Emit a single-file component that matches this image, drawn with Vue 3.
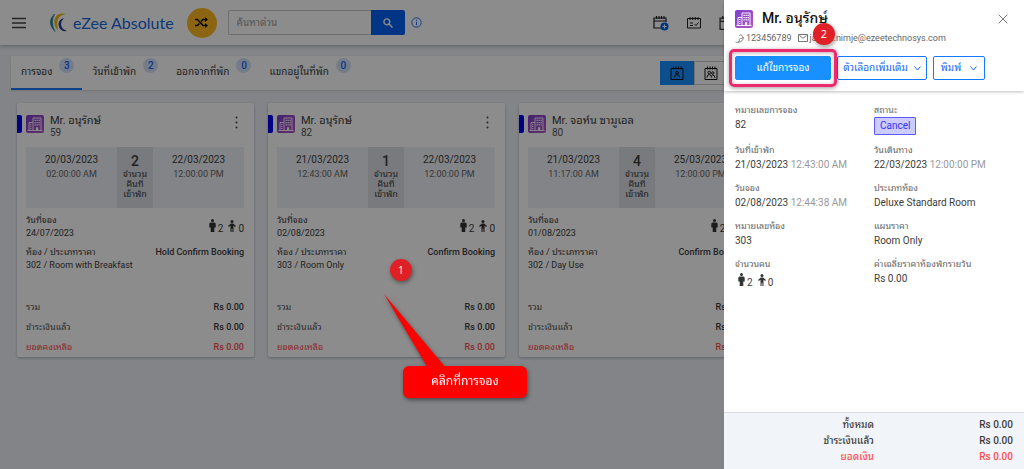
<script setup>
import { ref } from 'vue'

const query = ref('')
const activeTab = ref(0)

const tabs = [
  { label: 'การจอง', count: 3 },
  { label: 'วันที่เข้าพัก', count: 2 },
  { label: 'ออกจากที่พัก', count: 0 },
  { label: 'แขกอยู่ในที่พัก', count: 0 },
]

const bookings = [
  {
    name: 'Mr. อนุรักษ์', id: '59', inDate: '20/03/2023', inTime: '02:00:00 AM', nights: 2,
    outDate: '22/03/2023', outTime: '12:00:00 PM', booked: '24/07/2023',
    room: '302 / Room with Breakfast', status: 'Hold Confirm Booking',
  },
  {
    name: 'Mr. อนุรักษ์', id: '82', inDate: '21/03/2023', inTime: '12:43:00 AM', nights: 1,
    outDate: '22/03/2023', outTime: '12:00:00 PM', booked: '02/08/2023',
    room: '303 / Room Only', status: 'Confirm Booking',
  },
  {
    name: 'Mr. จอห์น ซามูเอล', id: '80', inDate: '21/03/2023', inTime: '11:17:00 AM', nights: 4,
    outDate: '25/03/2023', outTime: '12:00:00 PM', booked: '01/08/2023',
    room: '302 / Day Use', status: 'Confirm Booking',
  },
]

const details = [
  { label: 'หมายเลขการจอง', value: '82' },
  { label: 'สถานะ', tag: 'Cancel' },
  { label: 'วันที่เข้าพัก', value: '21/03/2023', time: '12:43:00 AM' },
  { label: 'วันเดินทาง', value: '22/03/2023', time: '12:00:00 PM' },
  { label: 'วันจอง', value: '02/08/2023', time: '12:44:38 AM' },
  { label: 'ประเภทห้อง', value: 'Deluxe Standard Room' },
  { label: 'หมายเลขห้อง', value: '303' },
  { label: 'แผนราคา', value: 'Room Only' },
  { label: 'จำนวนคน', people: true },
  { label: 'ค่าเฉลี่ยราคาห้องพักรายวัน', value: 'Rs 0.00' },
]
</script>

<template>
  <div class="app">
    <svg class="defs" aria-hidden="true">
      <defs>
        <linearGradient id="violet" x1="0" y1="0" x2="1" y2="1">
          <stop offset="0" stop-color="#7a3fd0" />
          <stop offset="1" stop-color="#b558c0" />
        </linearGradient>
        <symbol id="building" viewBox="0 0 18 18">
          <rect width="18" height="18" rx="2" fill="url(#violet)" />
          <path d="M7 15.500V3h8v12.500M7 7.500H3v8M1.500 15.500h15" fill="none" stroke="#fff" stroke-width=".9" />
          <path d="M8.500 4.700h1.300V6H8.500zm2 0h1.300V6h-1.300zm2 0h1.300V6h-1.300zM8.500 7h1.300v1.300H8.500zm2 0h1.300v1.300h-1.300zm2 0h1.300v1.300h-1.300zM8.500 9.300h1.300v1.300H8.500zm2 0h1.300v1.300h-1.300zm2 0h1.300v1.300h-1.300zM10 12.200h2.200v3.300H10zM4.200 9h1.200v1H4.200zm0 2h1.200v1H4.200zm0 2h1.200v1H4.200z" fill="#fff" />
        </symbol>
        <symbol id="adult" viewBox="0 0 7 13">
          <circle cx="3.500" cy="1.600" r="1.500" />
          <path d="M1.700 3.400h3.600Q6.700 3.600 6.700 5v3.600H5.300V13H1.700V8.600H.3V5Q.3 3.600 1.700 3.400z" />
        </symbol>
        <symbol id="child" viewBox="0 0 8 12">
          <circle cx="4" cy="1.600" r="1.500" />
          <path d="M2.800 3.400h2.400L7.900 6l-.7 1-1.700-1.200V12H4.400V8.800h-.8V12H2.500V5.800L.8 7l-.7-1z" />
        </symbol>
        <symbol id="calendar" viewBox="0 0 15 15">
          <path d="M1 3h13v10.500H1zM1 6h13M3.500 1v3M6.200 1v3M8.800 1v3M11.500 1v3" fill="none" stroke="currentColor" stroke-width="1.200" />
        </symbol>
      </defs>
    </svg>

    <header class="topbar">
      <button class="plain menu" aria-label="Menu">
        <svg width="14" height="12" viewBox="0 0 14 12"><path d="M0 1.500h14M0 6h14M0 10.500h14" stroke="#444" stroke-width="1.300" /></svg>
      </button>
      <a class="brand" href="#">
        <svg width="20" height="20" viewBox="0 0 20 20" fill="none">
          <path d="M5.500 1Q-3 9 6 18.500 1 9 5.500 1z" fill="#1d7f96" stroke="#1d7f96" stroke-width=".6" />
          <path d="M17 1Q7-1 5.500 7q-1 6 4 11Q7 11 9 6q2-4 8-5z" fill="#f5b90a" />
          <path d="M15 5q-7 2-5 9 2 5 8 4-6-2-6-7 0-3 3-6z" fill="#273d8f" />
        </svg>
        <span>eZee Absolute</span>
      </a>
      <button class="shuffle" aria-label="Switch property">
        <svg width="13" height="11" viewBox="0 0 13 11"><path d="M0 2.500h2.500L8 8.500h3M0 8.500h2.500l1.800-2M6.200 4.500 8 2.500h3" fill="none" stroke="#111" stroke-width="1.700" /><path d="M10 0l3 2.500L10 5zM10 6l3 2.500L10 11z" fill="#111" /></svg>
      </button>
      <form class="search" role="search" @submit.prevent>
        <input v-model="query" type="text" placeholder="ค้นหาด่วน" aria-label="ค้นหาด่วน" />
        <button aria-label="Search">
          <svg width="10" height="10" viewBox="0 0 10 10" fill="none" stroke="#fff" stroke-width="1.400"><circle cx="3.800" cy="3.800" r="2.900" /><path d="M6 6l3.500 3.500" /></svg>
        </button>
      </form>
      <button class="plain" aria-label="Info">
        <svg width="11" height="11" viewBox="0 0 11 11" fill="none" stroke="#1677ff" stroke-width="1"><circle cx="5.500" cy="5.500" r="4.700" /><path d="M5.500 4.700v3.500M5.500 2.700v1.100" /></svg>
      </button>
      <nav class="shortcuts">
        <button class="plain" aria-label="New booking">
          <svg width="16" height="16" viewBox="0 0 16 16" fill="none" stroke="#222" stroke-width="1.200"><path d="M8 13H1V3h12v4M1 6h12M3.500 1v3M6 1v3M8.500 1v3M11 1v3" /><circle cx="11.500" cy="11.500" r="4" fill="#0060f0" stroke="none" /><path d="M9.500 11.500h4M11.500 9.500v4" stroke="#fff" /></svg>
        </button>
        <button class="plain" aria-label="Tasks">
          <svg width="16" height="16" viewBox="0 0 16 16" fill="none" stroke="#222"><path d="M1.500 3.500h13v9.500h-13zM4 2v3M6.700 2v3M9.300 2v3M12 2v3M4 8h3M4 10.500h3M8.500 9l1.500 1.500L12.500 7.500" /></svg>
        </button>
        <button class="plain" aria-label="Calendar">
          <svg width="16" height="16"><use href="#calendar" /></svg>
        </button>
      </nav>
    </header>

    <section class="tabbar">
      <nav class="tabs">
        <button v-for="(tab, i) in tabs" :key="tab.label" class="tab" :class="{ active: i === activeTab }" @click="activeTab = i">
          <span>{{ tab.label }}</span><span class="count">{{ tab.count }}</span>
        </button>
      </nav>
      <div class="views">
        <button class="view on" aria-label="Single view">
          <svg width="14" height="14" viewBox="0 0 14 14" fill="none" stroke="#111"><path d="M1 2.500h12v11H1zM3.500.500v3M6 .500v3M8.500.500v3M11 .500v3M4.500 11.500q0-3 2.500-3t2.500 3" /><circle cx="7" cy="6.800" r="1.300" /></svg>
        </button>
        <button class="view" aria-label="Group view">
          <svg width="14" height="14" viewBox="0 0 14 14" fill="none" stroke="#111"><path d="M1 2.500h12v11H1zM3.500.500v3M6 .500v3M8.500.500v3M11 .500v3M3 11.500q0-3 2.300-3t2.300 3M8 8.800q3 0 3 3.200" /><circle cx="5.300" cy="6.500" r="1.300" /><circle cx="8.800" cy="7" r="1.200" /></svg>
        </button>
      </div>
    </section>

    <main class="cards">
      <article v-for="b in bookings" :key="b.id" class="card">
        <header class="card-head">
          <span class="stripe"></span>
          <svg width="18" height="18"><use href="#building" /></svg>
          <div class="who">
            <h2>{{ b.name }}</h2>
            <p>{{ b.id }}</p>
          </div>
          <button class="plain more" aria-label="More">
            <svg width="3" height="13" viewBox="0 0 3 13" fill="#444"><circle cx="1.500" cy="1.500" r="1" /><circle cx="1.500" cy="6.500" r="1" /><circle cx="1.500" cy="11.500" r="1" /></svg>
          </button>
        </header>
        <div class="stay">
          <div class="date"><strong>{{ b.inDate }}</strong><span>{{ b.inTime }}</span></div>
          <div class="nights"><b>{{ b.nights }}</b><span>จำนวน<br />คืนที่<br />เข้าพัก</span></div>
          <div class="date"><strong>{{ b.outDate }}</strong><span>{{ b.outTime }}</span></div>
        </div>
        <div class="row">
          <div><p>วันที่จอง</p><p>{{ b.booked }}</p></div>
          <div class="people">
            <svg width="7" height="13"><use href="#adult" /></svg><span>2</span>
            <svg width="8" height="12"><use href="#child" /></svg><span>0</span>
          </div>
        </div>
        <div class="row">
          <div><p>ห้อง / ประเภทราคา</p><p>{{ b.room }}</p></div>
          <strong class="status">{{ b.status }}</strong>
        </div>
        <dl class="totals">
          <div><dt>รวม</dt><dd>Rs 0.00</dd></div>
          <div><dt>ชำระเงินแล้ว</dt><dd>Rs 0.00</dd></div>
          <div class="due"><dt>ยอดคงเหลือ</dt><dd>Rs 0.00</dd></div>
        </dl>
      </article>
    </main>

    <div class="mask"></div>

    <span class="marker first">1</span>
    <div class="callout">
      <svg class="pointer" width="64" height="74" viewBox="0 0 64 74"><path d="M0 0L62 74H44z" fill="#f00" /></svg>
      <span>คลิกที่การจอง</span>
    </div>

    <aside class="drawer">
      <header class="drawer-head">
        <div class="title">
          <svg width="18" height="18"><use href="#building" /></svg>
          <h1>Mr. อนุรักษ์</h1>
          <button class="plain" aria-label="Close">
            <svg width="10" height="10" viewBox="0 0 10 10"><path d="M.7.700l8.600 8.600M9.300.700L.7 9.300" stroke="#777" /></svg>
          </button>
        </div>
        <div class="contact">
          <svg width="9" height="9" viewBox="0 0 9 9" fill="none" stroke="#666" stroke-width=".8"><path d="M5.700.600 8.300 3 6.900 4.500 5.800 4 4 5.800l.5 1.100L3 8.300Q.8 8.400.6 7.900M5.700.600 4.300 2M8.300 3Q8.600 7.600 3 8.300" /></svg>
          <span>123456789</span>
          <svg class="mail" width="10" height="8" viewBox="0 0 10 8" fill="none" stroke="#666" stroke-width=".9"><path d="M.5.500h9v7h-9zM1.500 1.500 5 4.300l3.500-2.800" /></svg>
          <a href="mailto:jayant.nimje@ezeetechnosys.com">jayant.nimje@ezeetechnosys.com</a>
        </div>
        <div class="actions">
          <div class="focus">
            <button class="btn primary">แก้ไขการจอง</button>
            <span class="outline"></span>
            <span class="marker second">2</span>
          </div>
          <button class="btn options">ตัวเลือกเพิ่มเติม
            <svg width="7" height="5" viewBox="0 0 7 5"><path d="M.5.500l3 3.500 3-3.500" fill="none" stroke="#1667f5" /></svg>
          </button>
          <button class="btn print">พิมพ์
            <svg width="7" height="5" viewBox="0 0 7 5"><path d="M.5.500l3 3.500 3-3.500" fill="none" stroke="#1667f5" /></svg>
          </button>
        </div>
      </header>

      <dl class="details">
        <div v-for="d in details" :key="d.label">
          <dt>{{ d.label }}</dt>
          <dd v-if="d.tag"><span class="tag">{{ d.tag }}</span></dd>
          <dd v-else-if="d.people" class="people">
            <svg width="7" height="13"><use href="#adult" /></svg><span>2</span>
            <svg width="8" height="12"><use href="#child" /></svg><span>0</span>
          </dd>
          <dd v-else>{{ d.value }} <small v-if="d.time">{{ d.time }}</small></dd>
        </div>
      </dl>

      <footer class="sum">
        <dl>
          <div><dt>ทั้งหมด</dt><dd>Rs 0.00</dd></div>
          <div><dt>ชำระเงินแล้ว</dt><dd>Rs 0.00</dd></div>
          <div class="due"><dt>ยอดเงิน</dt><dd>Rs 0.00</dd></div>
        </dl>
      </footer>
    </aside>
  </div>
</template>

<style>
html, body { background: #eef1f6; }
</style>

<style scoped>
.app {
  position: relative;
  min-height: 100vh;
  overflow: hidden;
  font: 10px/12px Roboto, Tahoma, "Noto Sans Thai Looped", Loma, Waree, "Noto Sans Thai", "Noto Sans", sans-serif;
  color: #3c3c3c;
  background: #eef1f6;
}
.app *, .app { box-sizing: border-box; }
h1, h2, p, dl, dd { margin: 0; }
button, input { font: inherit; color: inherit; }
svg { display: block; flex: none; }
.defs { position: absolute; width: 0; height: 0; }
.plain { padding: 0; border: 0; background: none; cursor: pointer; }

.topbar {
  display: flex;
  align-items: center;
  height: 45px;
  padding-left: 12px;
  background: #fff;
  box-shadow: 0 1px 4px rgba(0, 0, 0, .3);
}
.brand {
  display: flex;
  align-items: center;
  gap: 4px;
  margin-left: 23px;
  font: 16px/20px Lato, sans-serif;
  color: #1467dc;
  text-decoration: none;
}
.shuffle {
  display: grid;
  place-items: center;
  width: 30px;
  height: 30px;
  margin-left: 13px;
  padding: 0;
  border: 0;
  border-radius: 50%;
  background: #ffb822;
}
.search { display: flex; height: 25px; margin: 0 6px 0 11px; }
.search input {
  width: 143px;
  padding: 0 8px;
  border: 1px solid #ccc;
  border-right: 0;
  border-radius: 2px 0 0 2px;
  outline: 0;
  background: #fff;
}
.search input::placeholder { color: #999; }
.search button {
  display: grid;
  place-items: center;
  width: 34px;
  padding: 0;
  border: 0;
  border-radius: 0 2px 2px 0;
  background: #0062f5;
}
.shortcuts { display: flex; gap: 17px; width: 371px; margin-left: auto; }

.tabbar {
  display: flex;
  justify-content: space-between;
  height: 34px;
  margin: 11px 11px 0;
  background: #fff;
  box-shadow: 0 1px 2px rgba(0, 0, 0, .12);
}
.tabs { display: flex; }
.tab {
  display: flex;
  gap: 7px;
  padding: 10px 8px 0 10px;
  border: 0;
  border-bottom: 2px solid transparent;
  background: none;
}
.tab.active { border-color: #1677ff; }
.count {
  width: 15px;
  height: 15px;
  margin-top: -8px;
  border-radius: 50%;
  background: #d3e2fc;
  color: #1667f5;
  font-weight: 500;
  line-height: 15px;
  text-align: center;
}
.views { display: flex; width: 353px; padding: 5px 0; }
.view { display: grid; place-items: center; width: 34px; padding: 0; border: 1px solid #ccc; background: #fff; }
.view.on { border-color: #1890ff; background: #1890ff; }

.cards {
  display: grid;
  grid-template-columns: repeat(4, 1fr);
  gap: 14px;
  padding: 13px 17px;
}
.card {
  padding: 12px 10px 0 0;
  border-radius: 2px;
  background: #fff;
  box-shadow: 0 1px 3px rgba(0, 30, 80, .3);
}
.card-head { display: flex; align-items: flex-start; height: 32px; }
.stripe { width: 5px; height: 18px; margin-right: 4px; border-radius: 0 2px 2px 0; background: #0000f0; }
.who { flex: 1; padding-left: 6px; }
.who h2 { font-size: 11px; font-weight: 400; line-height: 12px; }
.who p { color: #555; }
.more { padding: 1px 6px 0 0; }
.stay { display: flex; height: 61px; margin-left: 9px; background: #eef1f6; }
.date { flex: 1; padding-top: 6px; text-align: center; }
.date strong { display: block; font-size: 10px; font-weight: 400; line-height: 14px; }
.date span { line-height: 14px; color: #666; font-size: 9px; }
.nights { width: 36px; padding-top: 6px; text-align: center; background: #dadee3; font-size: 9px; line-height: 10px; }
.nights b { display: block; font-size: 14px; font-weight: 500; line-height: 16px; }
.nights span { display: block; }
.row { display: flex; justify-content: space-between; margin: 6px 0 0 9px; font-size: 9px; line-height: 13px; }
.status { font-weight: 500; }
.people { display: flex; align-items: flex-end; align-self: center; height: 16px; font-size: 10px; line-height: 12px; }
.people svg { margin-bottom: 3px; fill: #333; }
.people span { padding-left: 2px; }
.people span + svg { margin-left: 5px; }
.totals { margin: 25px 0 0 9px; }
.totals div { display: flex; justify-content: space-between; line-height: 20px; }
.totals dt { font-size: 9px; color: #555; }
.totals dd { font-size: 9px; font-weight: 500; }
.totals .due dt, .totals .due dd, .due { color: #ff4d4f; }

.mask { position: fixed; inset: 0; background: rgba(0, 0, 0, .45); }

.marker {
  position: absolute;
  width: 22px;
  height: 22px;
  border-radius: 50%;
  background: #e02027;
  box-shadow: 1px 2px 4px rgba(0, 0, 0, .4);
  color: #fff;
  font: 11px/22px "Open Sans", sans-serif;
  text-align: center;
}
.first { left: 390px; top: 259px; }
.callout {
  position: absolute;
  left: 403px;
  top: 366px;
  width: 124px;
  height: 32px;
  border-radius: 6px;
  background: #f00;
  color: #fff;
  font-size: 12px;
  line-height: 31px;
  text-align: center;
  filter: drop-shadow(1px 2px 2px rgba(0, 0, 0, .45));
}
.pointer { position: absolute; left: -19px; top: -72px; }

.drawer {
  position: fixed;
  top: 0;
  right: 0;
  bottom: 0;
  display: flex;
  flex-direction: column;
  width: 300px;
  background: #fff;
}
.drawer-head { height: 91px; padding: 10px 16px 0 11px; box-shadow: 0 1px 3px rgba(0, 0, 0, .25); }
.title { display: flex; gap: 9px; height: 18px; color: #111; }
.title h1 { flex: 1; font-size: 14px; font-weight: 500; line-height: 16px; }
.contact { display: flex; align-items: center; gap: 2px; height: 20px; font-size: 9px; color: #666; }
.contact a { color: inherit; text-decoration: none; }
.mail { margin-left: 4px; }
.actions { display: flex; gap: 6px; margin-top: 8px; }
.focus { position: relative; display: flex; }
.outline {
  position: absolute;
  inset: -7px -6px;
  border: 3px solid #f0286e;
  border-radius: 5px;
  box-shadow: 0 1px 4px rgba(0, 0, 0, .4), inset 0 1px 4px rgba(0, 0, 0, .3);
  pointer-events: none;
}
.second { right: -4px; top: -33px; }
.btn {
  display: flex;
  align-items: center;
  justify-content: center;
  gap: 6px;
  height: 24px;
  padding: 0;
  border: 1px solid #1677ff;
  border-radius: 2px;
  background: #fff;
  color: #1667f5;
  white-space: nowrap;
}
.primary { width: 96px; border-color: #1890ff; background: #1890ff; color: #fff; }
.options { width: 90px; }
.print { width: 52px; gap: 9px; }
.details {
  display: grid;
  grid-template-columns: 139px 1fr;
  align-content: start;
  row-gap: 8px;
  flex: 1;
  padding: 12px 0 0 11px;
}
.details dt { font-size: 9px; line-height: 14px; color: #666; }
.details dd { line-height: 16px; }
.details small { font-size: 10px; color: #999; }
.details .people { height: 18px; padding-left: 3px; line-height: 12px; }
.tag {
  display: inline-block;
  padding: 0 5px;
  border: 1px solid #5a5aff;
  border-radius: 1px;
  background: #ccccff;
  color: #3434f5;
}
.sum { padding: 4px 11px 4px 0; border-top: 1px solid #d8dde4; background: #f1f5f9; }
.sum div { display: flex; line-height: 16px; }
.sum dt { width: 150px; text-align: right; font-weight: 500; }
.sum dd { flex: 1; text-align: right; font-weight: 500; }
</style>
